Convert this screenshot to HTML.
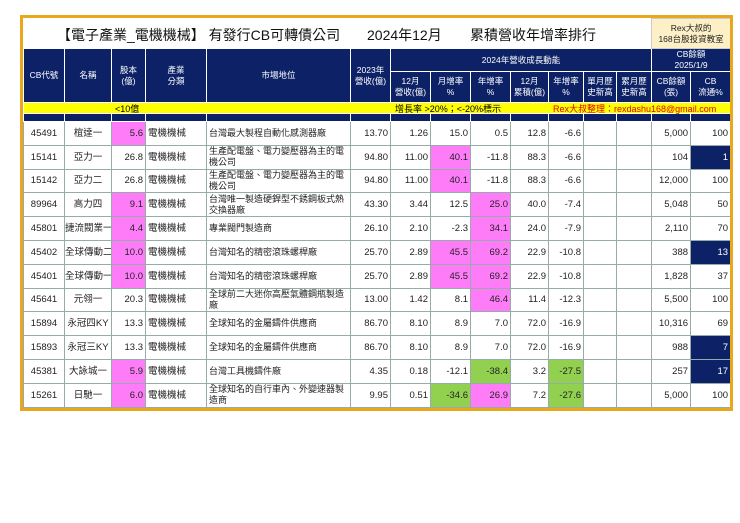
<!DOCTYPE html>
<html><head><meta charset="utf-8"><style>
body{margin:0;background:#fff;width:740px;height:523px;position:relative;font-family:"Liberation Sans","Noto Sans CJK TC",sans-serif;}
#f{position:absolute;left:20px;top:15px;width:707px;height:390px;border:3px solid #e9a81c;background:#fff;overflow:hidden;}
table{position:absolute;left:0;top:0;width:707px;border-collapse:collapse;table-layout:fixed;}
td{padding:0 2px;font-size:9.5px;color:#222;border:1px solid #9aa;overflow:hidden;line-height:11px;box-sizing:border-box;}
.h td{background:#0d2266;color:#fff;text-align:center;border:1px solid #fff;font-size:8.5px;padding:0;}
.r td{height:23.8px;text-align:right;}
.c{text-align:center!important;white-space:nowrap;padding:0!important}.l{text-align:left!important}
.r td.l+td.l{font-size:9px}
.m{background:#ff7cf9}.g{background:#92d050}.n{background:#0d2266;color:#fff}
.t{position:absolute;font-size:14px;color:#111;white-space:nowrap;top:7px}
.y{position:absolute;top:86px;font-size:9px;white-space:nowrap;line-height:11px}
</style></head><body><div id="f">
<table>
<colgroup><col style="width:41px"><col style="width:47px"><col style="width:34px"><col style="width:61px"><col style="width:144px"><col style="width:40px"><col style="width:40px"><col style="width:40px"><col style="width:40px"><col style="width:38px"><col style="width:35px"><col style="width:33px"><col style="width:35px"><col style="width:39px"><col style="width:40px"></colgroup>
<tr style="height:30px"><td colspan="13" style="border:none"></td><td colspan="2" style="background:#fdefc6;text-align:center;font-size:8.5px;border:1px solid #ccc;white-space:nowrap;padding:0">Rex大叔的<br>168台股投資教室</td></tr>
<tr class="h" style="height:22px"><td rowspan="2">CB代號</td><td rowspan="2">名稱</td><td rowspan="2">股本<br>(億)</td><td rowspan="2">產業<br>分類</td><td rowspan="2">市場地位</td><td rowspan="2">2023年<br>營收(億)</td><td colspan="7">2024年營收成長動能</td><td colspan="2">CB餘額<br>2025/1/9</td></tr>
<tr class="h" style="height:31px"><td>12月<br>營收(億)</td><td>月增率<br>%</td><td>年增率<br>%</td><td>12月<br>累積(億)</td><td>年增率<br>%</td><td>單月歷<br>史新高</td><td>累月歷<br>史新高</td><td>CB餘額<br>(張)</td><td>CB<br>流通%</td></tr>
<tr style="height:11px;background:#ffff00"><td colspan="15" style="border:none"></td></tr>
<tr class="h" style="height:8px"><td></td><td></td><td></td><td></td><td></td><td></td><td></td><td></td><td></td><td></td><td></td><td></td><td></td><td></td><td></td></tr>
<tr class="r"><td class="c">45491</td><td class="c">椬達一</td><td class="m">5.6</td><td class="l">電機機械</td><td class="l">台灣最大製程自動化感測器廠</td><td>13.70</td><td>1.26</td><td>15.0</td><td>0.5</td><td>12.8</td><td>-6.6</td><td></td><td></td><td>5,000</td><td>100</td></tr>
<tr class="r"><td class="c">15141</td><td class="c">亞力一</td><td>26.8</td><td class="l">電機機械</td><td class="l">生產配電盤、電力變壓器為主的電機公司</td><td>94.80</td><td>11.00</td><td class="m">40.1</td><td>-11.8</td><td>88.3</td><td>-6.6</td><td></td><td></td><td>104</td><td class="n">1</td></tr>
<tr class="r"><td class="c">15142</td><td class="c">亞力二</td><td>26.8</td><td class="l">電機機械</td><td class="l">生產配電盤、電力變壓器為主的電機公司</td><td>94.80</td><td>11.00</td><td class="m">40.1</td><td>-11.8</td><td>88.3</td><td>-6.6</td><td></td><td></td><td>12,000</td><td>100</td></tr>
<tr class="r"><td class="c">89964</td><td class="c">高力四</td><td class="m">9.1</td><td class="l">電機機械</td><td class="l">台灣唯一製造硬銲型不銹鋼板式熱交換器廠</td><td>43.30</td><td>3.44</td><td>12.5</td><td class="m">25.0</td><td>40.0</td><td>-7.4</td><td></td><td></td><td>5,048</td><td>50</td></tr>
<tr class="r"><td class="c">45801</td><td class="c">捷流閥業一</td><td class="m">4.4</td><td class="l">電機機械</td><td class="l">專業閥門製造商</td><td>26.10</td><td>2.10</td><td>-2.3</td><td class="m">34.1</td><td>24.0</td><td>-7.9</td><td></td><td></td><td>2,110</td><td>70</td></tr>
<tr class="r"><td class="c">45402</td><td class="c">全球傳動二</td><td class="m">10.0</td><td class="l">電機機械</td><td class="l">台灣知名的精密滾珠螺桿廠</td><td>25.70</td><td>2.89</td><td class="m">45.5</td><td class="m">69.2</td><td>22.9</td><td>-10.8</td><td></td><td></td><td>388</td><td class="n">13</td></tr>
<tr class="r"><td class="c">45401</td><td class="c">全球傳動一</td><td class="m">10.0</td><td class="l">電機機械</td><td class="l">台灣知名的精密滾珠螺桿廠</td><td>25.70</td><td>2.89</td><td class="m">45.5</td><td class="m">69.2</td><td>22.9</td><td>-10.8</td><td></td><td></td><td>1,828</td><td>37</td></tr>
<tr class="r"><td class="c">45641</td><td class="c">元翎一</td><td>20.3</td><td class="l">電機機械</td><td class="l">全球前二大迷你高壓氣體鋼瓶製造廠</td><td>13.00</td><td>1.42</td><td>8.1</td><td class="m">46.4</td><td>11.4</td><td>-12.3</td><td></td><td></td><td>5,500</td><td>100</td></tr>
<tr class="r"><td class="c">15894</td><td class="c">永冠四KY</td><td>13.3</td><td class="l">電機機械</td><td class="l">全球知名的金屬鑄件供應商</td><td>86.70</td><td>8.10</td><td>8.9</td><td>7.0</td><td>72.0</td><td>-16.9</td><td></td><td></td><td>10,316</td><td>69</td></tr>
<tr class="r"><td class="c">15893</td><td class="c">永冠三KY</td><td>13.3</td><td class="l">電機機械</td><td class="l">全球知名的金屬鑄件供應商</td><td>86.70</td><td>8.10</td><td>8.9</td><td>7.0</td><td>72.0</td><td>-16.9</td><td></td><td></td><td>988</td><td class="n">7</td></tr>
<tr class="r"><td class="c">45381</td><td class="c">大詠城一</td><td class="m">5.9</td><td class="l">電機機械</td><td class="l">台灣工具機鑄件廠</td><td>4.35</td><td>0.18</td><td>-12.1</td><td class="g">-38.4</td><td>3.2</td><td class="g">-27.5</td><td></td><td></td><td>257</td><td class="n">17</td></tr>
<tr class="r"><td class="c">15261</td><td class="c">日馳一</td><td class="m">6.0</td><td class="l">電機機械</td><td class="l">全球知名的自行車內、外變速器製造商</td><td>9.95</td><td>0.51</td><td class="g">-34.6</td><td class="m">26.9</td><td>7.2</td><td class="g">-27.6</td><td></td><td></td><td>5,000</td><td>100</td></tr>
</table>
<div class="t" style="left:34px">【電子產業_電機機械】 有發行CB可轉債公司</div>
<div class="t" style="left:344px">2024年12月</div>
<div class="t" style="left:447px">累積營收年增率排行</div>
<div class="y" style="left:92px">&lt;10億</div>
<div class="y" style="left:372px">增長率 &gt;20%；&lt;-20%標示</div>
<div class="y" style="left:530px;color:#e00000">Rex大叔整理：rexdashu168@gmail.com</div>
</div></body></html>
